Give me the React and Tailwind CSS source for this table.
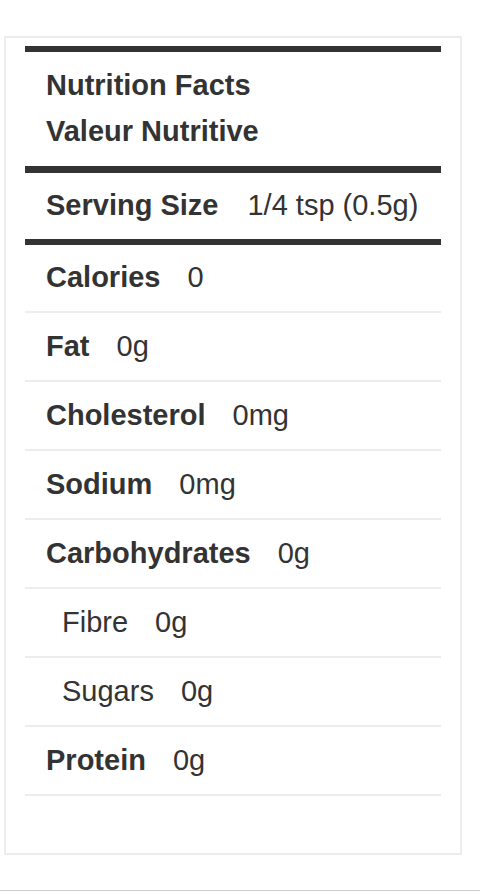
import React from "react";

const rows = [
  { label: "Calories", value: "0", first: true },
  { label: "Fat", value: "0g" },
  { label: "Cholesterol", value: "0mg" },
  { label: "Sodium", value: "0mg" },
  { label: "Carbohydrates", value: "0g" },
  { label: "Fibre", value: "0g", sub: true },
  { label: "Sugars", value: "0g", sub: true },
  { label: "Protein", value: "0g" },
];

const NutritionRow = ({ label, value, sub, first }) => (
  <div
    className={`flex pl-[21px] pb-[11px] border-b-2 border-[#ededed] leading-[46px] ${
      first ? "pt-[9px]" : "pt-[10px]"
    }`}
  >
    <span className={sub ? "pl-[16px] font-normal" : "font-bold"}>{label}</span>
    <span className="ml-[27px] font-normal">{value}</span>
  </div>
);

export default function App() {
  return (
    <div className="h-[891px] bg-white border-b border-[#cccccc] text-[#333333] text-[29px] font-['Liberation_Sans',Arial,sans-serif]">
      <div className="pt-[36px] pl-[4px]">
        <div className="w-[458px] border-2 border-[#ececec] px-[19px] pt-[8px] pb-[57px]">
          <div className="h-[6px] bg-[#333333]"></div>
          <div className="pl-[21px] pt-[10px] pb-[12px] font-bold leading-[46px]">
            <div>Nutrition Facts</div>
            <div>Valeur Nutritive</div>
          </div>
          <div className="h-[7px] bg-[#333333]"></div>
          <div className="flex pl-[21px] pt-[9px] pb-[11px] leading-[46px]">
            <span className="font-bold">Serving Size</span>
            <span className="ml-[29px]">1/4 tsp (0.5g)</span>
          </div>
          <div className="h-[6px] bg-[#333333]"></div>
          {rows.map((r) => (
            <NutritionRow key={r.label} {...r} />
          ))}
        </div>
      </div>
    </div>
  );
}
